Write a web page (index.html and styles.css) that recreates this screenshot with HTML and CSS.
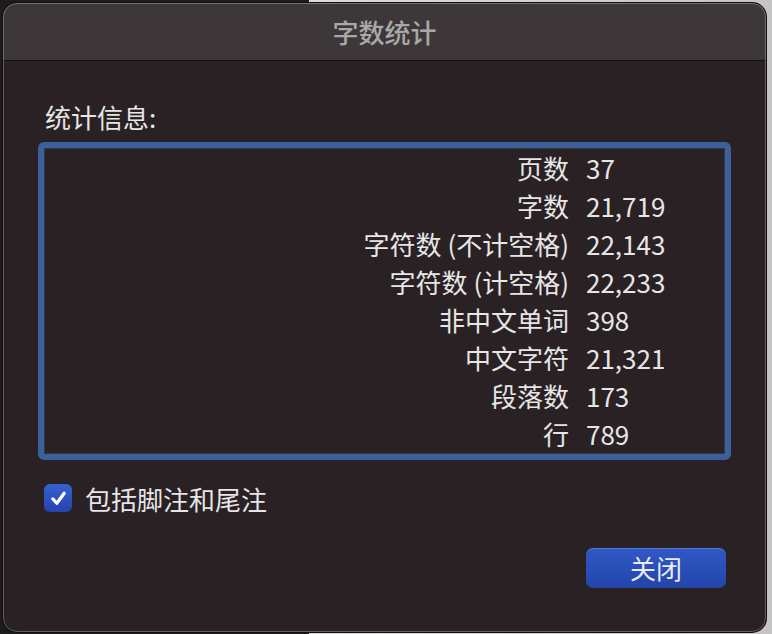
FILE: index.html
```html
<!DOCTYPE html>
<html lang="zh-CN">
<head>
    <meta charset="UTF-8">
    <meta name="viewport" content="width=device-width, initial-scale=1.0">
    <title>字数统计</title>
    <link rel="stylesheet" href="styles.css">
</head>
<body>
    <div class="window">
        <div class="titlebar">字数统计</div>

        <div class="content">
            <div class="section-label">统计信息:</div>

            <div class="stats">
                <div class="stat-name">页数</div><div class="stat-value">37</div>
                <div class="stat-name">字数</div><div class="stat-value">21,719</div>
                <div class="stat-name">字符数 (不计空格)</div><div class="stat-value">22,143</div>
                <div class="stat-name">字符数 (计空格)</div><div class="stat-value">22,233</div>
                <div class="stat-name">非中文单词</div><div class="stat-value">398</div>
                <div class="stat-name">中文字符</div><div class="stat-value">21,321</div>
                <div class="stat-name">段落数</div><div class="stat-value">173</div>
                <div class="stat-name">行</div><div class="stat-value">789</div>
            </div>

            <label class="check-row">
                <span class="checkbox">
                    <svg width="19" height="19" viewBox="0 0 20 20">
                        <path d="M4 10.5 L8.2 15 L16 4.5" fill="none" stroke="#fff" stroke-width="3.4" stroke-linecap="round" stroke-linejoin="round"/>
                    </svg>
                </span>
                包括脚注和尾注
            </label>

            <div class="actions">
                <button class="btn-primary">关闭</button>
            </div>
        </div>
    </div>
</body>
</html>
```

FILE: styles.css
```css
body {
    margin: 0;
    width: 772px;
    height: 634px;
    overflow: hidden;
    font-family: "Noto Sans CJK SC", "Noto Sans", sans-serif;
    background: linear-gradient(90deg, #1c1c1c 0, #1c1c1c 309px, #dcdcdc 309px, #c4c4c4 772px);
}
.window {
    position: relative;
    margin: 3px;
    width: 763px;
    height: 629px;
    border-radius: 14px;
    background: #2a2125;
    overflow: hidden;
    box-shadow: 0 0 0 1px #0e0e0e;
}
.window::after {
    content: "";
    position: absolute;
    inset: 0;
    border-radius: 14px;
    border: 1px solid rgba(255,255,255,0.28);
    pointer-events: none;
}
.titlebar {
    height: 57px;
    line-height: 57px;
    background: #3d3739;
    border-bottom: 1px solid #0f0d0e;
    text-align: center;
    color: #a8a8a8;
    font-size: 26px;
    font-weight: 500;
}
.content {
    padding: 41px 35px 0 35px;
    color: #e6e6e6;
    font-size: 26px;
}
.section-label {
    padding-left: 7px;
    line-height: 30px;
    height: 30px;
}
.stats {
    margin-top: 10px;
    height: 304px;
    border: 6px solid #3b609c;
    border-radius: 6px;
    box-shadow: inset 0 0 0 1px #343a45;
    padding: 1px 0 1px 0;
    display: grid;
    grid-template-columns: 525px 1fr;
    grid-auto-rows: 38px;
    column-gap: 17px;
    align-content: start;
}
.stat-name {
    text-align: right;
    line-height: 38px;
    white-space: nowrap;
}
.stat-value {
    line-height: 38px;
}
.check-row {
    margin-top: 23px;
    height: 30px;
    display: flex;
    align-items: center;
    gap: 13px;
    padding-left: 6px;
}
.checkbox {
    width: 28px;
    height: 28px;
    border-radius: 6px;
    background: linear-gradient(#3562d2, #2444ad);
    display: flex;
    align-items: center;
    justify-content: center;
}
.actions {
    margin-top: 35px;
    display: flex;
    justify-content: flex-end;
    padding-right: 5px;
}
.btn-primary {
    width: 140px;
    height: 40px;
    border: none;
    border-radius: 7px;
    background: linear-gradient(#3058c6, #2245aa);
    box-shadow: inset 0 1px 0 rgba(255,255,255,0.2);
    color: #e8e9f2;
    font-family: inherit;
    font-size: 26px;
    line-height: 40px;
    padding: 0;
}
```
